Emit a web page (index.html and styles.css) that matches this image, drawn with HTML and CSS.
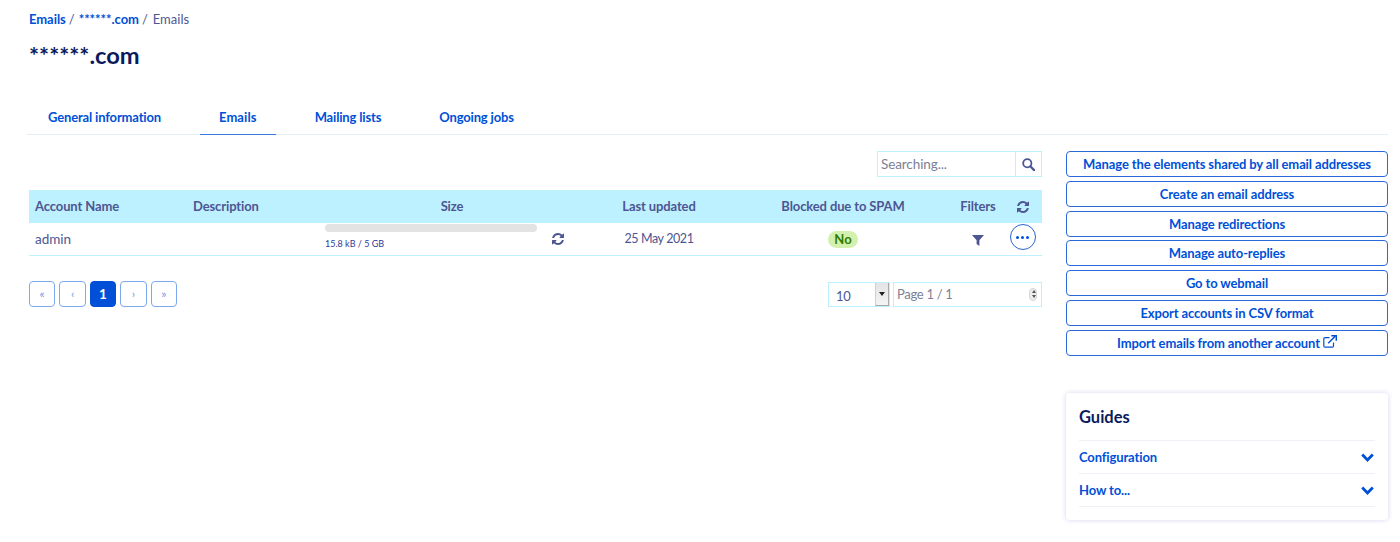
FILE: index.html
```html
<!DOCTYPE html>
<html lang="en">
<head>
<meta charset="utf-8">
<title>Emails</title>
<link rel="stylesheet" href="styles.css">
</head>
<body>
<svg class="sprite" width="0" height="0" aria-hidden="true">
  <symbol id="refresh" viewBox="128 128 1536 1536"><path d="M1639 1056q0 5-1 7-64 268-268 434.5t-478 166.5q-146 0-282.5-55t-243.5-157l-129 129q-19 19-45 19t-45-19-19-45v-448q0-26 19-45t45-19h448q26 0 45 19t19 45-19 45l-137 137q71 66 161 102t187 36q134 0 250-65t186-179q11-17 53-117 8-23 30-23h192q13 0 22.5 9.5t9.5 22.5zm25-800v448q0 26-19 45t-45 19h-448q-26 0-45-19t-19-45 19-45l138-138q-148-137-349-137-134 0-250 65t-186 179q-11 17-53 117-8 23-30 23h-199q-13 0-22.5-9.5t-9.5-22.5v-7q65-268 270-434.5t480-166.5q146 0 284 55.5t245 156.5l130-129q19-19 45-19t45 19 19 45z"/></symbol>
  <symbol id="chevron" viewBox="0 0 12 8"><path d="M1.1 1.3 6 6.2l4.9-4.9" fill="none" stroke="currentColor" stroke-width="2.6"/></symbol>
</svg>
<nav class="breadcrumb"><a>Emails</a><span class="sep">/</span><a>******.com</a><span class="sep">/</span><span class="current">Emails</span></nav>
<h1 class="title">******.com</h1>
<ul class="tabs">
  <li class="tab">General information</li>
  <li class="tab active">Emails</li>
  <li class="tab">Mailing lists</li>
  <li class="tab">Ongoing jobs</li>
</ul>
<div class="layout">
  <main class="main">
    <div class="search">
      <input class="search-input" type="text" placeholder="Searching...">
      <button class="search-btn" aria-label="Search">
        <svg width="13" height="13" viewBox="0 0 13 13"><circle cx="5.3" cy="5.3" r="4.1" fill="none" stroke="currentColor" stroke-width="1.8"/><path d="m8.3 8.3 3.8 3.8" stroke="currentColor" stroke-width="2.2" stroke-linecap="round"/></svg>
      </button>
    </div>
    <table class="grid">
      <colgroup><col class="c-name"><col class="c-desc"><col class="c-size"><col class="c-date"><col class="c-spam"><col class="c-filter"><col class="c-act"></colgroup>
      <thead>
        <tr>
          <th class="left">Account Name</th>
          <th class="left">Description</th>
          <th>Size</th>
          <th>Last updated</th>
          <th>Blocked due to SPAM</th>
          <th>Filters</th>
          <th><svg class="ico-refresh"><use href="#refresh"/></svg></th>
        </tr>
      </thead>
      <tbody>
        <tr>
          <td class="left">admin</td>
          <td></td>
          <td class="size-cell">
            <div class="size-wrap">
              <div class="usage"><div class="bar"></div><small class="usage-text">15.8 kB / 5 GB</small></div>
              <svg class="ico-refresh"><use href="#refresh"/></svg>
            </div>
          </td>
          <td class="date">25 May 2021</td>
          <td><span class="badge">No</span></td>
          <td><svg width="12" height="11" viewBox="0 0 12 11" class="funnel"><path d="M0 0h12L7.4 5.2V11L4.6 9V5.2z"/></svg></td>
          <td class="act-cell"><button class="more" aria-label="Actions"><i></i><i></i><i></i></button></td>
        </tr>
      </tbody>
    </table>
    <div class="pager-row">
      <div class="pager">
        <span class="pg">«</span><span class="pg">‹</span><span class="pg on">1</span><span class="pg">›</span><span class="pg">»</span>
      </div>
      <div class="pager-right">
        <div class="select"><span class="select-val">10</span><span class="select-arrow"></span></div>
        <div class="page-input"><span class="page-text">Page 1 / 1</span><span class="spin"></span></div>
      </div>
    </div>
  </main>
  <aside class="side">
    <div class="actions">
      <a class="btn">Manage the elements shared by all email addresses</a>
      <a class="btn">Create an email address</a>
      <a class="btn">Manage redirections</a>
      <a class="btn">Manage auto-replies</a>
      <a class="btn">Go to webmail</a>
      <a class="btn">Export accounts in CSV format</a>
      <a class="btn">Import emails from another account
        <svg class="ext" width="14" height="13" viewBox="0 0 14 13"><path d="M10.5 7.5V11a1.2 1.2 0 0 1-1.2 1.2H2A1.2 1.2 0 0 1 .8 11V3.8A1.2 1.2 0 0 1 2 2.6h4.5" fill="none" stroke="currentColor" stroke-width="1.2"/><path d="M5.2 8.3 12 1.5M8.3 .8h5v5" fill="none" stroke="currentColor" stroke-width="1.5"/></svg>
      </a>
    </div>
    <section class="guides">
      <h2 class="guides-title">Guides</h2>
      <div class="guide-row"><span>Configuration</span><svg width="13" height="9"><use href="#chevron"/></svg></div>
      <div class="guide-row"><span>How to...</span><svg width="13" height="9"><use href="#chevron"/></svg></div>
    </section>
  </aside>
</div>
</body>
</html>
```

FILE: styles.css
```css
* { box-sizing: border-box; }
html, body { margin: 0; height: 100%; }
body {
  padding: 11px 12px 0 29px;
  background: #fff;
  color: #4d5693;
  font-family: Lato, "Open Sans", sans-serif;
  font-size: 13.5px;
  overflow: hidden;
}
.sprite { position: absolute; }
.breadcrumb { display: flex; height: 16px; align-items: center; font-size: 13px; }
.breadcrumb a { color: #0050d7; font-weight: 700; letter-spacing: -.05px; }
.sep { margin: 0 4px 0 3px; color: #4d5693; }
.current { color: #4d5693; font-size: 13px; margin-left: 1px; }
.title { margin: 14px 0 0; height: 28px; line-height: 28px; font-size: 23.7px; font-weight: 700; color: #0a1a5c; }
.tabs { display: flex; gap: 20px; list-style: none; margin: 31px 0 0 -2px; padding: 0 0 0 2px; border-bottom: 1px solid #e4eef6; height: 35px; }
.tab { padding: 0 19px; height: 35px; line-height: 35px; font-weight: 700; font-size: 13px; letter-spacing: -.16px; color: #0050d7; }
.tab.active { border-bottom: 1px solid #3a78e0; letter-spacing: .1px; }
.layout { display: flex; gap: 24px; margin-top: 16px; }
.main { width: 1013px; }
.side { width: 322px; }
.search { display: flex; width: 165px; height: 26px; margin-left: auto; border: 1px solid #bef1ff; }
.search-input { flex: 1; min-width: 0; border: 0; padding: 0 3px; font: inherit; letter-spacing: -.1px; color: #4d5693; outline: 0; background: #fff; }
.search-input::placeholder { color: #7d7f96; opacity: 1; }
.search-btn { width: 26px; border: 0; border-left: 1px solid #bef1ff; background: #fff; color: #4d5693; padding: 0; display: flex; align-items: center; justify-content: center; }
.grid { width: 100%; margin-top: 13px; border-collapse: collapse; table-layout: fixed; }
.c-name { width: 158px; }
.c-desc { width: 132px; }
.c-size { width: 266px; }
.c-date { width: 148px; }
.c-spam { width: 220px; }
.c-filter { width: 50px; }
.c-act { width: 39px; }
.grid th { height: 33px; padding: 0 0 2px; background: #bef1ff; font-weight: 700; font-size: 13px; letter-spacing: -.12px; text-align: center; color: #4d5693; }
.grid td { height: 32px; padding: 0; text-align: center; border-bottom: 1px solid #bef1ff; }
.grid .left { text-align: left; padding-left: 6px; }
.grid .date { font-size: 12.5px; letter-spacing: -.4px; }
.ico-refresh { width: 12px; height: 12px; fill: #4d5693; vertical-align: middle; }
.size-wrap { display: flex; align-items: center; padding-left: 6px; gap: 15px; }
.usage { width: 212px; text-align: left; }
.bar { height: 8px; margin-top: -3px; border-radius: 4px; background: #e3e3e3; }
.usage-text { display: block; margin-top: 6px; font-size: 9px; line-height: 12px; color: #2f3a97; }
.badge { display: inline-block; position: relative; top: 1px; padding: 0 6px; height: 17px; line-height: 17px; border-radius: 9px; background: #d4f0ae; color: #2f7d00; font-weight: 700; font-size: 13px; }
.funnel { fill: #4d5693; vertical-align: middle; }
.more { display: inline-flex; gap: 2px; align-items: center; justify-content: center; width: 26px; height: 26px; padding: 0; border: 1px solid #2a64d0; border-radius: 50%; background: #fff; vertical-align: middle; margin-bottom: 3px; }
.more i { width: 3px; height: 3px; border-radius: 50%; background: #0050d7; }
.pager-row { display: flex; justify-content: space-between; margin-top: 25px; }
.pager { display: flex; gap: 4px; }
.pg { width: 26.4px; height: 26px; display: flex; align-items: center; justify-content: center; border: 1px solid #7da8f0; border-radius: 4px; color: #6f9cec; font-size: 12px; background: #fff; }
.pg.on { background: #0050d7; border-color: #0050d7; color: #fff; font-weight: 700; font-size: 13.5px; }
.pager-right { display: flex; gap: 3px; height: 25px; margin-top: 1px; }
.select { display: flex; justify-content: space-between; width: 62px; border: 1px solid #bef1ff; background: #fff; }
.select-val { padding: 5px 0 0 7px; font-size: 13px; letter-spacing: -.3px; }
.select-arrow { position: relative; width: 14px; background: linear-gradient(#e4e4e4, #f4f4f4); border-left: 1px solid #d0d0d0; border-right: 1px solid #a8a8a8; border-bottom: 1px solid #a8a8a8; }
.select-arrow::after { content: ""; position: absolute; left: 3px; top: 9px; border: 3px solid transparent; border-top: 4px solid #222; border-bottom: 0; }
.page-input { display: flex; align-items: center; justify-content: space-between; width: 149px; padding: 0 4px 0 3px; border: 1px solid #bef1ff; color: #7d7f96; font-size: 13px; }
.page-text { letter-spacing: -.3px; }
.spin { position: relative; width: 8px; height: 13px; border-radius: 4px; background: #ececec; border: 1px solid #d6d6d6; }
.spin::before { content: ""; position: absolute; left: 1.5px; top: 1.5px; border: 2px solid transparent; border-bottom: 3px solid #555; border-top: 0; }
.spin::after { content: ""; position: absolute; left: 1.5px; bottom: 1.5px; border: 2px solid transparent; border-top: 3px solid #555; border-bottom: 0; }
.actions { display: flex; flex-direction: column; gap: 3.75px; }
.btn { display: flex; align-items: center; justify-content: center; gap: 3px; height: 26px; border: 1px solid #2a68dc; border-radius: 4px; font-weight: 700; font-size: 13px; letter-spacing: -.12px; color: #0050d7; background: #fff; }
.ext { margin-top: -3px; }
.guides { margin-top: 37.6px; height: 127px; padding: 13px 13px 0; border-radius: 4px; background: #fff; box-shadow: 0 0 5px rgba(60, 60, 190, .22); }
.guides-title { margin: 0; height: 35px; line-height: 23px; font-size: 16.5px; font-weight: 700; color: #0a1a5c; border-bottom: 1px solid #eef1f6; }
.guide-row { display: flex; align-items: center; justify-content: space-between; height: 33px; padding-right: 1px; border-bottom: 1px solid #eef1f6; font-weight: 700; font-size: 13px; letter-spacing: -.12px; color: #0050d7; }
```
